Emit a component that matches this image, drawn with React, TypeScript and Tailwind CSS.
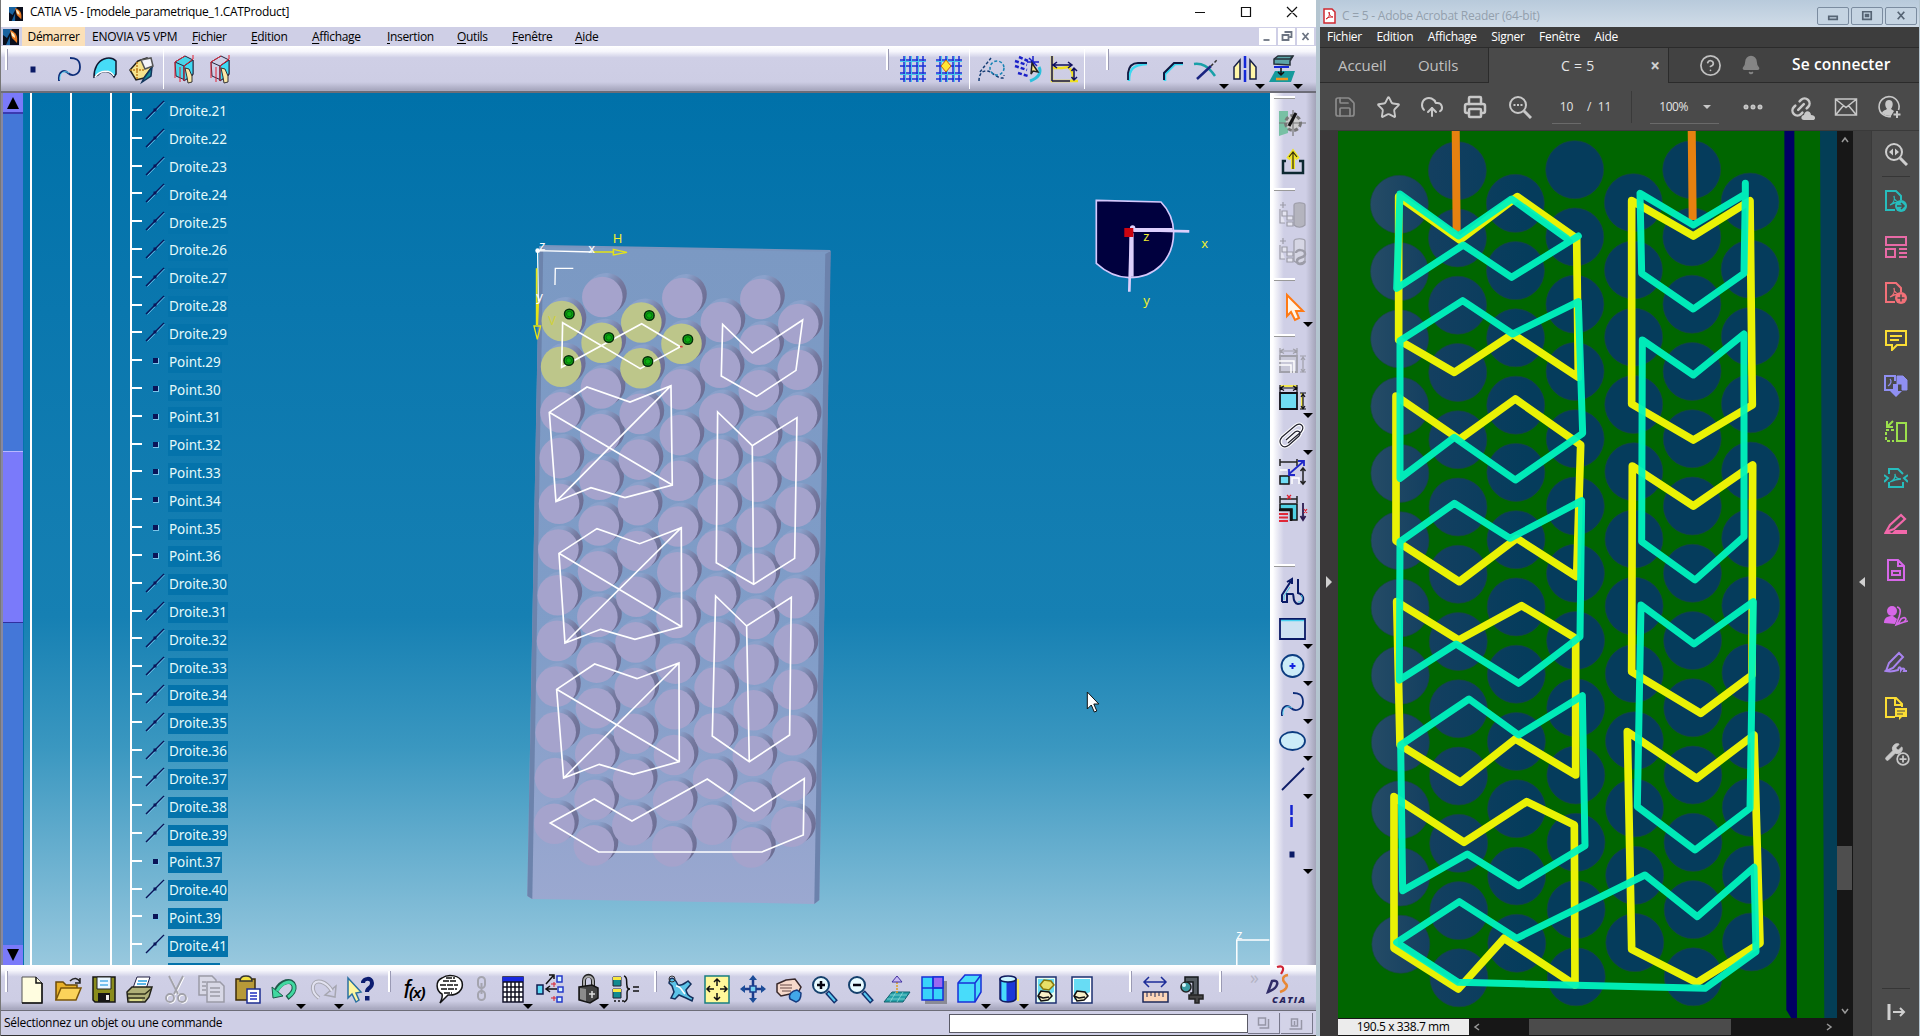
import React from "react";
import {
  Star, CloudUpload, Printer, Save, Link2, CircleHelp, Bell, Ellipsis, Wrench,
} from "lucide-react";

type P = { children?: React.ReactNode; className?: string };

const Ico = ({ children, className = "" }: P) => (
  <svg viewBox="0 0 32 32" className={"block h-8 w-8 shrink-0 overflow-visible " + className} fill="none" stroke="#0a1a66" strokeWidth="1.5">
    {children}
  </svg>
);

const Slot = ({ children, arrow, w = "w-9" }: { children?: React.ReactNode; arrow?: boolean; w?: string }) => (
  <div className={"relative flex shrink-0 justify-center " + w}>
    {children}
    {arrow && <i className="absolute -right-0.5 top-[31px] h-0 w-0 border-x-[5px] border-t-[5px] border-x-transparent border-t-black" />}
  </div>
);

const Handle = ({ className = "" }: { className?: string }) => (
  <div className={"h-[21px] w-[3px] shrink-0 border-r border-[#9a9ab4] bg-white " + className} />
);
const Sep = ({ className = "" }: { className?: string }) => <div className={"-mt-1 h-10 w-px shrink-0 bg-white " + className} />;
const RailMark = ({ className }: { className: string }) => <div className={"ml-px h-[3px] w-[21px] shrink-0 border-b border-[#999] bg-white " + className} />;

/* ---------- sketch icons ---------- */
const PointIcon = () => <Ico><rect x="13.500" y="13.500" width="5" height="6" fill="#0a1a66" stroke="none" /></Ico>;
const SplineIcon = () => <Ico><path d="M6 28c-1-10 5-12 9-8s12 2 12-6-5-9-10-9" stroke="#0c2c78" strokeWidth="1.800" /><path d="M7 27c-1-8 5-10 9-7" stroke="#56d6f5" strokeWidth="1" /></Ico>;
const SurfaceIcon = () => <Ico><path d="M5 24C5 15 9 8 15 6c6-2 10 0 12 2v13l-2 3c-4-7-12-7-16-2z" fill="#46dcf7" stroke="#101830" /><path d="M6 24c5-7 15-8 19-1" stroke="#fff" /></Ico>;
const BoxIcon = () => <Ico><path d="M5 17 13 8l9-3 5 9-8 11-8 2z" fill="#f7e38c" stroke="#222" /><path d="m19 25 8-11-1 9-9 6z" fill="#168b96" stroke="#14365c" /><path d="M16 7 26 5l2 8-8 3z" fill="#f4f4fa" stroke="#555" /><path d="M5 17h15M12 9v18" stroke="#c08020" strokeDasharray="2 1" /></Ico>;
const CubeHand = ({ f }: { f: string }) => (
  <Ico>
    <path d="M7 9 17 3l8 4v15l-8 5-9-4z" fill={f} stroke="#262640" strokeWidth="1" />
    <path d="M7 9l9 4 9-6M16 13v15" stroke="#262640" strokeWidth="1" /><path d="M16 13 25 7v14l-9 7z" fill="#3fdaf4" stroke="#262640" strokeWidth="1" />
    <path d="M7 25V9l10-6M12 29V14M16 28V13l9-7V2" stroke="#e02030" strokeWidth="1" />
    <path d="m17 15 4 1 3 7v6l-4 1-1-6z" fill="#fbe8a8" stroke="#333" strokeWidth="1" />
  </Ico>
);
const GridIcon = ({ dot }: { dot?: boolean }) => (
  <Ico>
    <path d="M7 3v26M13 3v26M20 3v26M26 3v26M3 7h26M3 13h26M3 20h26M3 26h26" stroke="#1a2fd8" strokeWidth="1.500" />
    <path d="M8.500 3v26M14.500 3v26M21.500 3v26M3 8.500h26M3 21.500h26" stroke="#48c8e8" strokeWidth="1" />
    {dot && <path d="m13 7 5 6-5 6-5-6z" fill="#ffe634" stroke="#c8600c" strokeWidth="1" />}
  </Ico>
);
const ConstrIcon = () => <Ico><path d="M3 28c0-11 8-12 13-8s13 8 12 2M4 19 15 5" stroke="#143c74" strokeDasharray="3 2" /><circle cx="21" cy="15" r="7" stroke="#1683b4" strokeDasharray="3 2" /></Ico>;
const DimConstrIcon = () => <Ico><path d="m3 8 12 4M3 13l12 4M6 20l10 3M7 4l9 4" stroke="#1a20c8" strokeWidth="2.500" strokeDasharray="4 2" /><path d="M21 3v12M15 9h12M17 5l8 8" stroke="#1a20c8" /><path d="M18 28c8-3 12-8 9-14" stroke="#2cc0dc" strokeWidth="3" /><path d="m20 10 6 9-5-1-2 3z" fill="#fbe88c" stroke="#222" /></Ico>;
const GeoDimIcon = () => <Ico><path d="M4 3v25h26M4 15h10l6-1c5 3 5 8 5 14" stroke="#f0e020" strokeWidth="2.500" /><path d="M4 28V3M4 28h18M5 12h19M9 9l-4 3 4 3M20 9l4 3-4 3M26 15v12M23.500 18l2.500-3 3 3M23.500 24l2.500 3 3-3" stroke="#101060" /></Ico>;
const FilletIcon = () => <Ico><path d="M8 28c0-12 4-16 18-17" stroke="#3ad8f0" strokeWidth="2.500" /><path d="M7 27v-7c1-7 4-10 10-10h9" stroke="#101840" strokeWidth="1.800" /></Ico>;
const ChamferIcon = () => <Ico><path d="M8 28v-7l10-10h8" stroke="#3ad8f0" strokeWidth="2.500" /><path d="M7 27v-7l10-10h9" stroke="#101840" strokeWidth="2" /></Ico>;
const TrimIcon = () => <Ico><path d="M1 11c8-1 14 2 21 12" stroke="#19a0a8" strokeWidth="2.500" /><path d="M4 26 18 13" stroke="#1a2480" strokeWidth="2.500" /><path d="m18 13 7-7" stroke="#333" strokeDasharray="3 2" /></Ico>;
const MirrorIcon = () => <Ico><path d="M5 26V14l6-7v19zM27 26V14l-6-7v19z" fill="#fff6a8" stroke="#182048" /><path d="M16 3v27" stroke="#1428d8" strokeWidth="2.500" strokeDasharray="12 2" /></Ico>;
const ProjectIcon = () => <Ico><path d="m3 29 6-11h20l-4 11z" fill="#169a9c" stroke="none" /><path d="m8 6 4-3h15l-3 5v4l-16-1z" fill="#5ca4a8" stroke="#26303a" /><path d="M8 6h16l3-3" stroke="#26303a" /><path d="M8 14h15" stroke="#1428d8" strokeWidth="2" /><path d="M15 15v7m-3-3 3 3 3-3" stroke="#101010" /><path d="M10 26h12" stroke="#f09820" strokeWidth="2.500" /></Ico>;

/* ---------- file / standard icons ---------- */
const NewIcon = () => <Ico><path d="M6 4h14l6 6v20H6z" fill="#fffde0" stroke="#555" strokeWidth="1" /><path d="M20 4v6h6M26 10v20H6" stroke="#111" /></Ico>;
const OpenIcon = () => <Ico><path d="M4 27V9h7l3 3h11v5" fill="#e8b028" stroke="#6b4a08" /><path d="m4 27 5-12h20l-5 12z" fill="#fbd35a" stroke="#7b5508" /><path d="M18 8c4-4 8-3 10 1m0-4v5h-5" stroke="#222" /></Ico>;
const SaveIcon = () => <Ico><path d="M5 4h22v25H7l-2-2z" fill="#8a8c1c" stroke="#161616" /><path d="M9 4h14v12H9z" fill="#e9f6ff" stroke="#222" strokeWidth="1" /><path d="M12 8h8M12 12h8" stroke="#50b0e8" /><path d="M10 20h12v9H10z" fill="#161616" stroke="none" /><path d="M18 22h3v5h-3z" fill="#eee" stroke="none" /></Ico>;
const PrintIcon = () => <Ico><path d="m9 15 4-11h13l-4 12z" fill="#fff" stroke="#224" strokeWidth="1" /><path d="M14 8h9M13 11h9" stroke="#28a0e0" /><path d="m3 19 5-5h20l-3 10-4 5H4z" fill="#b0b078" stroke="#22221a" /><path d="M4 21h17l6-5M4 25h17" stroke="#33331c" /><path d="M6 27h12" stroke="#e8e88c" strokeWidth="1.500" /></Ico>;
const CutIcon = () => <Ico><g stroke="#fff" transform="translate(1 1)"><path d="m9 3 9 18M23 3l-9 18" /><circle cx="10" cy="25" r="4" /><circle cx="22" cy="25" r="4" /></g><g stroke="#a2a2aa" strokeWidth="1.800"><path d="m9 3 9 18M23 3l-9 18" /><circle cx="10" cy="25" r="4" /><circle cx="22" cy="25" r="4" /></g></Ico>;
const CopyIcon = () => <Ico><g fill="#d8d8e6" stroke="#9a9aa6"><path d="M3 3h13l4 4v15H3z" /><path d="M11 9h13l4 4v16H11z" /><path d="M14 15h10M14 19h10M14 23h10M6 9h4M6 13h4M6 17h4" /></g></Ico>;
const PasteIcon = () => <Ico><path d="M4 6h19v21H4z" fill="#b89a38" stroke="#3c2c08" /><path d="M8 8c0-4 3-5 6-5s6 1 6 5z" fill="#f2e040" stroke="#333" /><path d="M15 16h13v14H15z" fill="#fff" stroke="#1c2c90" /><path d="M18 20h7M18 23h7M18 26h7" stroke="#2030c0" /></Ico>;
const UndoIcon = () => <Ico><path d="M7 18C12 8 23 5 25 13c1 5-3 9-7 12" stroke="#1c5a4a" strokeWidth="5" /><path d="m3 14 1 11 10-2z" fill="#40d8a0" stroke="#1c5a4a" strokeWidth="1" /><path d="M8 18C13 9 23 6 25 13c1 5-3 9-6 11" stroke="#40d8a0" strokeWidth="3" /></Ico>;
const RedoIcon = () => <Ico><path d="m29 13-1 11-10-2z" stroke="#a6a6b0" /><path d="M25 18C19 8 8 5 6 13c-1 5 2 9 6 12" stroke="#a6a6b0" strokeWidth="4" /><path d="M25 18C19 8 8 5 6 13c-1 5 2 9 6 12" stroke="#e2e2f0" strokeWidth="2" /></Ico>;
const HelpIcon = () => <Ico><path d="m4 5 13 14-5 1 3 7-3 2-4-8-4 4z" fill="#fff7a0" stroke="#2a70a0" /><path d="M19 10c0-5 9-6 9 0s-5 4-5 9" stroke="#0c1c70" strokeWidth="4" /><path d="M21 23h4.500v4.500H21z" fill="#0c1c70" stroke="none" /></Ico>;
const FxIcon = () => <div className="flex h-8 w-8 items-center justify-center font-['Liberation_Sans'] text-[25px] italic leading-8 tracking-[-1.500px] text-black"><span>f</span><span className="mt-2 text-[15px] font-bold tracking-[-1px]">(x)</span></div>;
const CommentIcon = () => <Ico><path d="M8 21C2 18 1 8 8 5c7-5 18-2 20 4 2 8-5 14-14 13L6 30c2-4 3-6 2-9z" fill="#fff" stroke="#111" /><path d="M9 8h14M6 12h18M7 16h16M12 5h9M10 20h8" stroke="#111" strokeDasharray="6 1" /></Ico>;
const ChainIcon = () => <Ico><g stroke="#a4a4ae" strokeWidth="2"><rect x="12" y="4" width="7" height="11" rx="3.500" /><rect x="12" y="18" width="7" height="9" rx="3.500" /><path d="M15.500 10v11" /></g></Ico>;
const TableIcon = () => <Ico><path d="M6 4h20v25H6z" fill="#fff" stroke="#15152c" /><path d="M5.500 4h21v5h-21z" fill="#1828e0" stroke="none" /><path d="M6 9h20M6 14h20M6 19h20M6 24h20M10 9v20M14 9v20M18 9v20M22 9v20" stroke="#101020" /></Ico>;
const GraphIcon = () => <Ico><path d="M2 12h6v9H2z" fill="#58d8f4" stroke="#101c50" /><path d="M22 3h5v6h-5zM23 14h5v5h-5zM22 24h5v5h-5z" fill="#d8f4ff" stroke="#2438c8" /><path d="M12 16h10m-7-3-4 3 4 3M11 11l7-8m-4-1h5v4" stroke="#111" /><path d="M16 11h5M19 9v5M16 25h5M19 23v5" stroke="#d82030" strokeWidth="1" /></Ico>;
const LockIcon = () => <Ico><path d="M11 13V8c0-7 9-7 9 0v5" stroke="#222" strokeWidth="4" /><path d="M11 13V8c0-6 9-6 9 0v5" stroke="#aaa" strokeWidth="2" /><path d="m6 14 13-2 6 3v10l-8 5-11-3z" fill="#444" stroke="#151515" /><path d="M7 15v11l6 2V16z" fill="#8c8c8c" stroke="none" /><path d="M19 18v7M16 21h6" stroke="#ddd" /></Ico>;
const EquivIcon = () => <Ico><path d="M3 4h8v9H3zM3 16h8v9H3z" fill="#128a90" stroke="#223" strokeWidth="1" /><path d="M3 4h8v3H3zM3 16h8v3H3z" fill="#f8e840" stroke="none" /><path d="M14 3c4 1 2 5 3 10 0 2 1 3 3 3-2 0-3 1-3 4 0 5 1 7-3 9" stroke="#111" /><path d="M23 14h6M23 18h6M4 28h2M8 28h2M12 28h2" stroke="#111" /></Ico>;
const PlaneIcon = () => <Ico><path d="M5 6c3-2 5 0 8 6 4 1 7-2 10-4l3 3-5 6c1 4 2 6 7 8l-1 3-6-3-7-3-4 4-4-1 3-6-2-6-3-3z" fill="#5cc4e8" stroke="#14305c" /><circle cx="7" cy="6" r="3" stroke="#333" strokeWidth="1" /><path d="M11 13c5 0 5 4 9 8" stroke="#fff" /></Ico>;
const FitIcon = () => <Ico><path d="M4 3h24v27H4z" fill="#fff89a" stroke="#187e80" /><path d="M16 6v7m-3-4 3-3 3 3M16 27v-7m-3 4 3 3 3-3M6 16h7M9 13l-3 3 3 3M26 16h-7m4-3 3 3-3 3" stroke="#111" /></Ico>;
const PanIcon = () => <Ico><path d="M16 5v22M5 16h22" stroke="#1b3c8c" strokeWidth="2.500" /><path d="m16 2-4 5h8zM16 30l-4-5h8zM3 16l5-4v8zM29 16l-5-4v8z" fill="#1b4c98" stroke="none" /><path d="M13 13h6v6h-6z" fill="#74d0f0" stroke="#1b3c8c" /></Ico>;
const RotateIcon = () => <Ico><path d="M4 11 13 7l9-1 6 8-3 6-8 1-9 2-4-4z" fill="#f7d9cb" stroke="#38282a" /><path d="M7 12h12M7 15h12M9 18h9" stroke="#664844" strokeWidth="1" /><path d="M17 26c-2-5 2-8 7-9l4 3c0 5-1 8-5 9z" fill="#42a8e8" stroke="#163c80" /></Ico>;
const ZoomIcon = ({ plus }: { plus?: boolean }) => <Ico><path d="m18 19 9 10" stroke="#12306c" strokeWidth="5" /><path d="m19 20 7 8" stroke="#58c8f0" strokeWidth="2" /><circle cx="12" cy="12" r="8" fill="#e8fbff" stroke="#14406c" strokeWidth="2" /><path d={plus ? "M8 12h8M12 8v8" : "M8 12h8"} stroke="#050510" strokeWidth="2.500" /></Ico>;
const NormalIcon = () => <Ico><path d="m3 29 8-10h18l-7 10z" fill="#24a0a8" stroke="#12606c" strokeWidth="1" /><path d="m6 26h18M9 22h17M15 19l-6 10M22 19l-6 10" stroke="#98e0e0" strokeWidth=".7" /><path d="M16 9v11" stroke="#e0a020" strokeDasharray="2 1" /><path d="m11 9 5-6 5 6z" fill="#c8b8f4" stroke="#4030a0" strokeWidth="1" /></Ico>;
const MultiIcon = () => <Ico><path d="M8 8h22v23H8z" fill="#8a8a96" stroke="none" /><path d="M5 4h21v23H5z" fill="#38d4fa" stroke="#1830d8" /><path d="M16 4h10v11H16z" fill="#9c68f0" stroke="#1830d8" /><path d="M5 15h21M16 4v23" stroke="#1830d8" /></Ico>;
const CubeIcon = () => <Ico><path d="m4 10 7-8h16v17l-6 10H4z" fill="#48dcfa" stroke="#1830d8" /><path d="M4 10h17v19M21 10l6-8" stroke="#1830d8" /></Ico>;
const CylIcon = () => <Ico><path d="M26 6v22" stroke="#f8e860" strokeWidth="2" /><path d="M8 6h16v20c-3 4-13 4-16 0z" fill="#1c38d8" stroke="#101c60" /><path d="M9.500 8h5v20c-3 0-5-1-5-2z" fill="#48dcfa" stroke="none" /><ellipse cx="16" cy="6" rx="8" ry="3" fill="#c8f4ff" stroke="#101c60" /></Ico>;
const ShowIcon = ({ two }: { two?: boolean }) => <Ico><path d="M6 4h20v26H6z" fill={two ? "#e8fff0" : "#fff"} stroke="#1c3070" /><path d="M8 6h16v13L8 27z" fill="#68dcf4" stroke="none" /><path d="m8 23 3-5 8 1 3 4-4 4-7 1z" fill="#f8f0c8" stroke="#111" /><path d="m8 23 5 2 6-1" stroke="#111" />{two && <path d="m10 12 4-5 7 1 3 4-5 5-6-1z" fill="#e8e068" stroke="#88780c" />}</Ico>;
const MeasureIcon = () => <Ico><path d="M5 9h22M10 4 5 9l5 5M22 4l5 5-5 5" stroke="#1c2c98" strokeWidth="1.500" /><path d="M4 19h25v10H4z" fill="#fdd6b8" stroke="#1c2858" /><path d="M8 19v5M12 19v4M16 19v5M20 19v4M24 19v5" stroke="#1c2858" strokeWidth="1" /></Ico>;
const CaliperIcon = () => <Ico><path d="M10 4h13v20h-7v-4h2V9h-5v4h-3z" fill="#555c62" stroke="#15191c" /><circle cx="11" cy="14" r="5" fill="#3c9ca4" stroke="#222" /><circle cx="9" cy="12" r="2" fill="#d8f8ff" stroke="none" /><path d="M14 22h14v4h-4v4h-4v-4h-6z" fill="#444" stroke="#222" /></Ico>;

/* ---------- right rail icons ---------- */
const GearPen = () => <Ico><path d="M3 4h9v22L3 29z" fill="#78c0a4" stroke="none" /><circle cx="17" cy="16" r="7.500" fill="#ccc" stroke="#777" strokeWidth="3" strokeDasharray="4 2.500" /><path d="M3 16h27M17 3v26" stroke="#777" strokeWidth="1.200" /><path d="m13 19 7-13" stroke="#111" strokeWidth="3" /></Ico>;
const ExitIcon = () => <Ico><path d="M10 15H7v12h20V15h-4" stroke="#0c2830" strokeWidth="2.500" /><path d="M17 23V9m-5 4 5-7 5 7" stroke="#f0e428" strokeWidth="4" /><path d="M17 23V7m-4 4 4-5 4 5" stroke="#332c08" strokeWidth="1.200" /></Ico>;
const TreeCyl = ({ q }: { q?: boolean }) => <Ico><g stroke="#9c9ca8" fill="#e4e4f0" strokeWidth="1.200"><path d="M4 6h6M7 3v6M4 10v14h5M6 12h5v5H6zM11 17h6v4h-6zM11 23h6v4h-6z" /><path d="M18 6c0-3 11-3 11 0v20c-3 3-8 3-11 0z" fill={q ? "#d6d6e4" : "#b4b4be"} />{q && <path d="M20 18c0-4 9-4 9 1s-8 2-8 7 7 3 8 0" strokeWidth="2.500" fill="none" />}</g></Ico>;
const SelectIcon = () => <Ico><path d="M11 4v21l4-4 4 8 4-2-3-7h7z" fill="#fff6ea" stroke="#ff7a14" strokeWidth="2" /></Ico>;
const DimBase = ({ c, f }: { c: string; f: string }) => <><path d="M4 3v7M21 3v7M4 6h17M8 4 4 6l4 2.500M17 4l4 2-4 2.500M24 11h6M24 27h6M27 12v15M25 15l2-3 2 3M25 24l2 3 2-3" stroke={c} strokeWidth="1.200" /><path d="M4 11h17v16H4z" fill={f} stroke={c} strokeWidth="1.800" /></>;
const DimGray = () => <Ico><DimBase c="#a0a0aa" f="#c8c8d8" /><path d="M3 20h12v8M3 16h15v12" stroke="#fff" /></Ico>;
const DimIcon = () => <Ico><path d="M4 4h17M26 11v16" stroke="#f4e850" strokeWidth="2" /><DimBase c="#101018" f="#70dcf4" /></Ico>;
const ClipIcon = () => <Ico><path d="m12 24 13-11c5-6-1-10-6-6L6 18c-5 6 1 13 7 8l10-9c3-4-1-6-4-4l-9 8" stroke="#fff" strokeWidth="3.500" /><path d="m12 24 13-11c5-6-1-10-6-6L6 18c-5 6 1 13 7 8l10-9c3-4-1-6-4-4l-9 8" stroke="#222230" strokeWidth="1.200" /></Ico>;
const AnimIcon = () => <Ico><path d="M4 3v7M21 3v7M4 6h17M27 12v16M24.500 15l2.500-3 2.500 3M24.500 25l2.500 3 2.500-3" stroke="#222" /><path d="M4 20h9v8H4z" fill="#70dcf4" stroke="#111" /><path d="m13 18 15-13m-6 0h6v5M13 13v6h6" stroke="#2028c8" strokeWidth="1.800" /><path d="M4 14h7M16 28v-6h7v6" stroke="#fff" /></Ico>;
const EditDim = () => <Ico><path d="M4 3v7M21 3v7M4 6h17" stroke="#222" /><path d="M4 11h17v16h-5V16H4z" fill="#50d0e4" stroke="#111" /><path d="M3 17h12v11" stroke="#111" strokeWidth="2.500" /><path d="M3 21h9M3 24.500h9M3 28h9" stroke="#e02838" strokeWidth="1.800" /><path d="M27 10v17m-2.500-4 2.500 4 2.500-4" stroke="#2c1c50" strokeWidth="1.800" /><path d="m11 2 4 4m0-4-4 4M28 16l3 4m0-4-3 4" stroke="#e02030" strokeWidth="1.200" /></Ico>;
const ProfileIcon = () => <Ico><path d="M6 27V20l9-14M6 27h5v-8h6c1 0-1 9 5 10 7 0 7-9 0-11V4M11 7l5-3v5" strokeWidth="2" /><path d="M8 25v-4l6-9M25 20c3 3 1 7-3 7" stroke="#38c4e0" strokeWidth="1" /></Ico>;
const RectIcon = () => <Ico><path d="M4 6h25v20H4z" fill="#cde2f2" strokeWidth="1.800" /><path d="M5 7.500h23" stroke="#48d0f0" /></Ico>;
const CircIcon = () => <Ico><circle cx="16.500" cy="16" r="11" fill="#ccecf8" stroke="#0c3c80" strokeWidth="1.800" /><path d="M13.500 16h6M16.500 13v6" stroke="#1424e0" strokeWidth="2" /></Ico>;
const EllIcon = () => <Ico><ellipse cx="16.500" cy="16" rx="12.500" ry="9" fill="#ccecf8" stroke="#0c3c80" strokeWidth="1.800" /></Ico>;
const LineIcon = () => <Ico><path d="M6 27 28 5" strokeWidth="1.800" /></Ico>;
const AxisIcon = () => <Ico><path d="M15.500 5v23" stroke="#1424d0" strokeWidth="2.500" strokeDasharray="10 2" /></Ico>;

const labels = [
  ...Array.from({ length: 9 }, (_, i) => `Droite.${21 + i}`),
  ...Array.from({ length: 8 }, (_, i) => `Point.${29 + i}`),
  ...Array.from({ length: 10 }, (_, i) => `Droite.${30 + i}`),
  "Point.37", "Droite.40", "Point.39", "Droite.41",
];

const Tree = () => (
  <div className="relative h-full w-[210px] overflow-hidden">
    <div className="absolute inset-0 flex">
      <div className="ml-[6px] w-0.5 bg-white" /><div className="ml-[38px] w-0.5 bg-white" />
      <div className="ml-[38px] w-0.5 bg-white" /><div className="ml-[18px] w-0.5 bg-white" />
    </div>
    <div className="absolute left-[107px] top-[5px] flex flex-col">
      {labels.map((l) => (
        <div key={l} className="flex h-[27.820px] shrink-0 items-center">
          <div className="-mt-1 h-0.5 w-[11px] bg-white" />
          <svg viewBox="0 0 20 20" className="-mt-1 ml-[3px] h-5 w-5">
            {l[0] === "D" ? (
              <><path d="M1 19 19 1" stroke="#0a1458" strokeWidth="1.400" /><path d="M2.500 19.500 19.500 2" stroke="#7ac4e8" strokeWidth=".8" /><path d="M8.500 8.500h3v3h-3z" fill="#0a1458" /></>
            ) : (
              <><path d="M8 8h6v6H8z" fill="#7ac4e8" /><path d="M8 8h5v5H8z" fill="#0a1458" /></>
            )}
          </svg>
          <span className="ml-[3px] bg-[#0473ab] px-[1px] font-['Noto_Sans'] text-[13.500px] leading-[21px] tracking-[-0.050px] text-[#e4fafa]">{l}</span>
        </div>
      ))}
      <div className="ml-[37px] mt-[3px] h-5 w-[52px] bg-[#0473ab]" />
    </div>
  </div>
);

const boardCols = [
  [562.5, 321, 555, 12], [603, 297, 594.5, 13], [642, 322.5, 633, 12], [683, 298, 673, 13],
  [721.5, 322, 713, 12], [761, 299, 752, 13], [799, 324, 792, 12],
];
const discs = boardCols.flatMap(([x, y, x2, n], c) =>
  Array.from({ length: n }, (_, i) => ({ x: x + ((x2 - x) * i) / (n - 1), y: y + i * 45.7, row: i, c }))
);
const isLit = (c: number, i: number) => (c === 0 && i < 2) || (c === 1 && i === 1) || (c === 2 && i < 2) || (c === 3 && i === 1);

const Board = () => (
  <svg viewBox="24.7 93 1246 872" className="absolute inset-0 h-full w-full" fill="none">
    <defs>
      <linearGradient id="face" x1="0" y1="0" x2="0" y2="1"><stop offset="0" stopColor="#7b99c3" /><stop offset=".6" stopColor="#809dc8" /><stop offset="1" stopColor="#9ba8d0" /></linearGradient>
      <linearGradient id="side" x1=".1" y1="0" x2="1" y2=".6"><stop offset=".35" stopColor="#8aa1cb" /><stop offset=".7" stopColor="#75799f" /><stop offset="1" stopColor="#6d6e94" /></linearGradient>
    </defs>
    <path d="M540 246 831 251 820 900 815 904 532 899 528 896z" fill="url(#face)" />
    <path d="M540 250 544 246 533 899 528 896z" fill="#6c83ac" />
    <path d="M826 254 831.500 251 820 900 815 904z" fill="#6c82ac" />
    <path d="M544 246 831 251" stroke="#7b94bd" strokeWidth="2" />
    {discs.map((d, i) => (
      <g key={i}>
        <circle cx={d.x + 4} cy={d.y - 3.5} r="20.500" fill="url(#side)" />
        <circle cx={d.x} cy={d.y} r="20.300" fill={isLit(d.c, d.row) ? "#bdc68a" : "#a5a3cc"} />
      </g>
    ))}
    <g transform="translate(520 230) scale(.33333)" stroke="#fff" strokeWidth="5">
      <path d="M130 278 363 416 483 350 367 281 127 412zM610 283 699 369 850 270 830 421 712 499 606 438z" />
      <path d="M90 547 203 471 332 516 455 467 459 765 317 803 215 773 110 815zM90 547 459 765M110 815 455 467" />
      <path d="M595 546 699 647 833 563 826 985 703 1063 591 998zM699 647 703 1063" />
      <path d="M119 970 233 896 361 941 486 893 487 1190 347 1228 244 1198 137 1239zM119 970 487 1190M137 1239 486 893" />
      <path d="M589 1098 682 1188 816 1102 811 1515 690 1595 579 1518zM682 1188 690 1595" />
      <path d="M112 1378 226 1302 353 1346 479 1299 480 1595 342 1633 240 1603 133 1644zM112 1378 480 1595M133 1644 479 1299" />
      <path d="M93 1779 225 1707 338 1773 564 1647 704 1743 855 1646 852 1815 728 1866 238 1866z" />
      <path d="M107 165 108 115H162M55 62 57 215M55 62 220 66" strokeWidth="4" />
      <g stroke="#e4e416"><path d="M220 66H285M57 215 54 285M52 115V285" strokeWidth="5" /><path d="M282 58 323 67 282 75zM44 288H64L54 328z" strokeWidth="4" /></g>
      <circle cx="55" cy="62" r="7" fill="#fff" stroke="none" />
      <path d="M482 350h8" stroke="#d04040" />
    </g>
    {[[570, 314], [650, 315.5], [609.5, 337.5], [688.500, 339.500], [569.500, 360.500], [648.500, 361.500]].map(([x, y]) => (
      <g key={x}><circle cx={x} cy={y} r="4.800" fill="#0cae10" stroke="#062c0a" strokeWidth="1.500" /><circle cx={x} cy={y} r="2.800" stroke="#075010" strokeWidth=".7" /></g>
    ))}
    <g transform="translate(860 0) scale(.33333)">
      <path d="M711 601 905 606A134 134 0 0 1 943 697C943 780 885 833 810 833 770 832 735 812 711 790z" fill="#00003e" stroke="#d4c8fc" strokeWidth="5" />
      <path d="M812 690 990 694M815 700 810 875" stroke="#dccffc" strokeWidth="8" /><path d="M822 690H940M817 700V830" stroke="#dccffc" strokeWidth="12" />
      <circle cx="820" cy="684" r="8" fill="#dccffc" /><path d="M795 684h27v27h-27z" fill="#cc0410" />
    </g>
    <g fontFamily="Noto Sans" fontSize="13" fill="#f0ee30">
      <text x="1144" y="241">z</text><text x="1202" y="248">x</text><text x="1144" y="305">y</text>
      <text x="613.500" y="243">H</text><text x="549" y="325" fill="#cfd040">V</text>
      <g fill="#fff"><text x="540" y="250">z</text><text x="589" y="253">x</text><text x="537" y="301">y</text><text x="1237" y="939">z</text></g>
    </g>
    <path d="M1237.500 965V940H1270" stroke="#fff" strokeWidth="1.500" />
    <path d="M1088 692v17l4-4 3 7 2.500-1-3-7h5z" fill="#fff" stroke="#111" />
  </svg>
);

const menu = [
  ["Fichier", "w-[59px]"], ["Edition", "w-[61px]"], ["Affichage", "w-[75px]"], ["Insertion", "w-[70px]"],
  ["Outils", "w-[55px]"], ["Fenêtre", "w-[63px]"], ["Aide", "w-10"],
];

const Logo = ({ className }: { className: string }) => (
  <svg viewBox="0 0 16 16" className={className}><path d="M0 0h16v16H0z" fill="#0a0e1c" /><path d="M0 0h9L4 9 0 6zM7 7 3 16h4z" fill="#1c78c0" opacity=".8" /><path d="M7 1c6 2 8 6 7 13L9 9z" fill="#e87820" /><path d="M8 3c3 1 4 3 4 6L9 7z" fill="#fff0c8" /></svg>
);

const barBg = "bg-[linear-gradient(#ffffff_0,#f6f6fc_12%,#cfcfe6_26%,#cdcde4_80%,#a9a9c0_97%)]";
const R = "w-[38px]";

const Catia = () => (
  <div className="flex w-[1316px] shrink-0 flex-col border-l border-[#777] bg-[#cfcfe6] font-['Open_Sans'] text-xs text-black">
    <div className="flex h-[27px] shrink-0 items-center bg-white pl-2">
      <Logo className="h-[14px] w-[14px]" />
      <span className="ml-[7px] -mt-1 tracking-[-0.320px]">CATIA V5 - [modele_parametrique_1.CATProduct]</span>
      <svg viewBox="0 0 110 14" className="ml-auto mr-[15px] mb-1 h-[14px] w-[110px]" fill="none" stroke="#111" strokeWidth="1.200">
        <path d="M4 7.500h10M50.500 2.500h9v9h-9zM96 2l10 10M106 2 96 12" />
      </svg>
    </div>
    <div className="flex h-[19px] shrink-0 items-center tracking-[-0.350px]">
      <Logo className="ml-[1px] h-4 w-[18px]" />
      <span className="ml-[2px] flex h-full w-[63px] items-center justify-center bg-[#fbe0b8]">Démarrer</span>
      <span className="ml-[7px] w-[100px] whitespace-nowrap tracking-[-0.250px]">ENOVIA V5 VPM</span>
      {menu.map(([m, w]) => (<span key={m} className={w}><u className="underline-offset-2">{m[0]}</u>{m.slice(1)}</span>))}
      <div className="ml-auto mr-[2px] flex gap-[2px]">
        {["M4 12h6", "M6 4h7v5h-2M4 7h6v5H4z", "m5 5 6 7m0-7-6 7"].map((d) => (
          <svg key={d} viewBox="0 0 16 17" className="h-[17px] w-[17px] bg-white" fill="none" stroke="#6c7482" strokeWidth="1.800"><path d={d} /></svg>
        ))}
      </div>
    </div>
    <div className={"flex h-[47px] shrink-0 items-start border-b-2 border-[#6d6d78] pt-[7px] " + barBg}>
      <Handle className="-mt-1 ml-1" />
      <div className="ml-[7px] flex"><Slot><PointIcon /></Slot><Slot><SplineIcon /></Slot><Slot><SurfaceIcon /></Slot><Slot><BoxIcon /></Slot></div>
      <Sep className="ml-[4px]" />
      <div className="ml-[2px] flex"><Slot><CubeHand f="#49d4e8" /></Slot><Slot><CubeHand f="#cfcfe6" /></Slot></div>
      <Handle className="-mt-1 ml-[648px]" />
      <div className="ml-[6px] flex"><Slot><GridIcon /></Slot><Slot><GridIcon dot /></Slot></div>
      <Sep className="ml-[2px]" />
      <div className="ml-[4px] flex"><Slot><ConstrIcon /></Slot><Slot><DimConstrIcon /></Slot><Slot><GeoDimIcon /></Slot></div>
      <Sep className="ml-[2px]" />
      <Handle className="-mt-1 ml-[21px]" />
      <div className="ml-[10px] flex"><Slot><FilletIcon /></Slot><Slot><ChamferIcon /></Slot><Slot arrow><TrimIcon /></Slot><Slot arrow><MirrorIcon /></Slot><Slot arrow w={R}><ProjectIcon /></Slot></div>
    </div>
    <div className="flex h-[872px] shrink-0">
      <div className="flex w-[23px] shrink-0 flex-col border-l-2 border-[#8888a0] bg-[#0473ab] pr-[1px]">
        <div className="flex h-[21px] items-center justify-center border-b-2 border-[#3a3ab0] bg-[#7a7afa]"><i className="h-0 w-0 border-x-[6px] border-b-[12px] border-x-transparent border-b-black" /></div>
        <div className="h-[337px] bg-[#4477d8]" />
        <div className="h-[172px] border-y border-t-[#b8b8ff] border-b-[#3030a0] bg-[#7a7afa]" />
        <div className="flex-1 bg-[#4477d8]" />
        <div className="flex h-[20px] items-center justify-center bg-[#7a7afa]"><i className="h-0 w-0 border-x-[6px] border-t-[12px] border-x-transparent border-t-black" /></div>
      </div>
      <div className="relative w-[1246px] shrink-0 overflow-hidden bg-[linear-gradient(#0071a9_0,#0a77ae_25%,#1680b3_60%,#3a97c0_75%,#98c8de_100%)]">
        <Tree />
        <Board />
      </div>
      <div className="flex flex-1 flex-col bg-[linear-gradient(90deg,#ffffff_0,#fff_6%,#cfcfe6_30%,#cfcfe6_78%,#a3a3b8_100%)] pl-[3px]">
        <RailMark className="mt-[3px]" />
        <div className="mt-[8px] flex flex-col gap-[7px]"><Slot w={R}><GearPen /></Slot><Slot w={R}><ExitIcon /></Slot></div>
        <RailMark className="mt-[10px]" />
        <div className="mt-[8px] flex flex-col gap-1"><Slot w={R}><TreeCyl /></Slot><Slot w={R}><TreeCyl q /></Slot></div>
        <RailMark className="mt-[11px]" />
        <div className="mt-[10px]"><Slot w={R} arrow><SelectIcon /></Slot></div>
        <RailMark className="mt-[11px]" />
        <div className="mt-[8px] flex flex-col gap-[5px]"><Slot w={R}><DimGray /></Slot><Slot arrow w={R}><DimIcon /></Slot><Slot arrow w={R}><ClipIcon /></Slot><Slot w={R}><AnimIcon /></Slot><Slot w={R}><EditDim /></Slot></div>
        <RailMark className="mt-[39px]" />
        <div className="mt-[8px] flex flex-col gap-[5.500px]">
          <Slot w={R}><ProfileIcon /></Slot><Slot arrow w={R}><RectIcon /></Slot><Slot arrow w={R}><CircIcon /></Slot><Slot arrow w={R}><SplineIcon /></Slot>
          <Slot arrow w={R}><EllIcon /></Slot><Slot arrow w={R}><LineIcon /></Slot><Slot w={R}><AxisIcon /></Slot><Slot arrow w={R}><PointIcon /></Slot>
        </div>
      </div>
    </div>
    <div className={"flex h-[46px] shrink-0 items-start border-b border-[#6d6d78] pt-[8px] " + barBg}>
      <Handle className="-mt-0.5 ml-[4px]" />
      <div className="ml-[6px] flex"><Slot><NewIcon /></Slot><Slot><OpenIcon /></Slot><Slot><SaveIcon /></Slot><Slot><PrintIcon /></Slot><Slot><CutIcon /></Slot><Slot><CopyIcon /></Slot><Slot><PasteIcon /></Slot><Slot arrow w={R}><UndoIcon /></Slot><Slot arrow w={R}><RedoIcon /></Slot><Slot><HelpIcon /></Slot></div>
      <Handle className="-mt-0.5 ml-[10px]" />
      <div className="ml-[5px] flex"><Slot><FxIcon /></Slot><Slot><CommentIcon /></Slot><Slot w="w-[27px]"><ChainIcon /></Slot><Slot arrow><TableIcon /></Slot><Slot w="w-[40px]"><GraphIcon /></Slot><Slot arrow><LockIcon /></Slot><Slot w={R}><EquivIcon /></Slot></div>
      <Handle className="-mt-0.5 ml-[9px]" />
      <div className="ml-[6px] flex"><Slot><PlaneIcon /></Slot><Slot><FitIcon /></Slot><Slot><PanIcon /></Slot><Slot><RotateIcon /></Slot><Slot><ZoomIcon plus /></Slot><Slot><ZoomIcon /></Slot><Slot><NormalIcon /></Slot><Slot><MultiIcon /></Slot><Slot arrow w={R}><CubeIcon /></Slot><Slot arrow w={R}><CylIcon /></Slot><Slot w="w-[37px]"><ShowIcon two /></Slot><Slot><ShowIcon /></Slot></div>
      <Handle className="-mt-0.5 ml-[29px]" />
      <div className="ml-[5px] flex"><Slot><MeasureIcon /></Slot><Slot><CaliperIcon /></Slot></div>
      <Handle className="-mt-0.5 ml-[10px]" />
      <span className="-mt-1 ml-[28px] text-lg leading-4 text-[#b4b4c4]">»</span>
      <svg viewBox="0 0 44 44" className="-mt-[9px] ml-[5px] h-[44px] w-[44px] shrink-0" fill="none">
        <path d="M13 3c6-2 8 1 4 7" stroke="#d02434" strokeWidth="2.200" />
        <path d="M4 28l4-11c8-2 7 7-4 11z" stroke="#302c68" strokeWidth="2.500" />
        <path d="M24 11c-6 1-6 5-3 8 4 3 1 7-5 9" stroke="#e88834" strokeWidth="2.500" />
        <text x="8" y="39" fontFamily="Open Sans" fontSize="9.500" fontWeight="800" fontStyle="italic" fill="#27245c" textLength="33">CATIA</text>
      </svg>
    </div>
    <div className="flex flex-1 items-start border-b border-[#333]">
      <span className="ml-[3px] mt-[4px] tracking-[-0.280px]">Sélectionnez un objet ou une commande</span>
      <div className="ml-auto mt-[3px] h-[19px] w-[299px] border border-[#5a5a66] bg-white" />
      {["M10 5h7v7h-7zM20 6v9h-9", "M10 6h6v7h-6zM20 7v9H8M13 8v4"].map((d) => (
        <svg key={d} viewBox="0 0 30 20" className="mr-[1px] mt-[2px] h-[21px] w-[32px] border-b border-r border-[#77778a] bg-[#d3d3e8]" fill="none" stroke="#9696a6" strokeWidth="1.500"><path d={d} /></svg>
      ))}
      <div className="w-[2px]" />
    </div>
  </div>
);

/* ---------- document viewer ---------- */
const pdfCols = [[238, 223, 12], [412, 122, 13], [586, 220, 12], [764, 119, 13], [940, 218, 12], [1115, 119, 13], [1290, 216, 12]];
const yellow = [
  "M236 200 420 330 592 200 770 325 775 742 578 612 403 727 236 630z",
  "M228 798 418 928 586 807 782 945 770 1340 590 1225 418 1355 228 1232z",
  "M230 1415 416 1530 605 1427 767 1525 767 1935 586 1827 421 1957 240 1845z",
  "M222 2000 432 2137 620 2015 763 2085 765 2565 552 2425 415 2577 222 2455z",
  "M935 212 1120 318 1290 212 1297 825 1120 930 935 822z",
  "M937 1008 1120 1128 1298 1005 1296 1635 1142 1750 935 1625z",
  "M922 1805 1130 1945 1302 1815 1320 2440 1130 2558 935 2458z",
];
const cyan = [
  "M775 318 575 442 430 345 230 475 240 192 415 318 575 207 740 325",
  "M240 632 428 512 578 612 775 515 788 910 586 1050 403 922 240 1045z",
  "M240 1235 403 1120 570 1225 785 1112 780 1520 596 1660 408 1542 238 1650z",
  "M242 1845 447 1707 596 1815 787 1697 795 2147 596 2267 442 2172 248 2282z",
  "M230 2437 418 2315 590 2425 975 2235 1132 2360 1302 2212 1308 2465 1155 2575 415 2557z",
  "M1276 160V192L1120 285 960 190 965 430 1120 537 1272 430 1276 192",
  "M967 630 1120 735 1272 612V1220L1125 1350 965 1235z",
  "M963 1425 1122 1542 1300 1415 1290 2035 1125 2160 952 2030z",
];

const PdfPage = () => (
  <svg viewBox="54 3 1497 2661" preserveAspectRatio="none" className="block h-[887px] w-[499px] bg-[#006600]" fill="none">
    <defs><linearGradient id="pd" gradientUnits="userSpaceOnUse" x1="140" y1="0" x2="620" y2="0"><stop offset="0" stopColor="#264c66" /><stop offset=".4" stopColor="#133f60" /><stop offset="1" stopColor="#053c5c" /></linearGradient></defs>
    <g className="blur-[1.500px]">
      {pdfCols.flatMap(([x, y, n]) => Array.from({ length: n }, (_, i) => (
        <circle key={`${x}-${i}`} cx={x + i * 0.4} cy={y + i * 201.8} r="87" fill="url(#pd)" stroke="#154a3c" strokeWidth="2" />
      )))}
      <path d="M1393-10h30l4 1390 4 1300h-8l-24-40-3-1350z" fill="#000064" />
      <path d="M1500-10h70v2690h-57z" fill="#033e56" />
      <g strokeLinejoin="round" strokeLinecap="round">
        <g stroke="#eaf205" strokeWidth="23">{yellow.map((d) => <path key={d} d={d} />)}</g>
        <g stroke="#e68110" strokeWidth="24" strokeLinecap="butt"><path d="M407-15 410 305M1115-15 1118 270" /></g>
        <g stroke="#00f3bd" strokeWidth="21" strokeOpacity=".95">{cyan.map((d) => <path key={d} d={d} />)}</g>
      </g>
    </g>
  </svg>
);

const G = ({ children, c, className = "" }: { children: React.ReactNode; c: string; className?: string }) => (
  <svg viewBox="0 0 24 24" className={"block h-6 w-6 shrink-0 " + className} fill="none" stroke={c} strokeWidth="2">{children}</svg>
);
const acro = "M6 16c4-2 5-6 4-9 0 4 3 6 6 6-4 0-7 1-10 3z";

const Tools = () => (
  <div className="flex w-[48px] shrink-0 flex-col items-center border-l border-[#3a3a3a] bg-[#4b4b4b] pl-px pt-[11px]">
    <G c="#cfcfcf"><circle cx="10" cy="10" r="8" /><path d="m16 16 7 7" strokeWidth="3" /><path d="m9 6.500-4 3.500 4 3.500zM11 6.500l4 3.500-4 3.500z" fill="#cfcfcf" stroke="none" /></G>
    <div className="mt-[10px] h-px w-7 bg-[#363636]" />
    <div className="mt-[12px] flex flex-col gap-[22.100px]">
      <G c="#27bdbd"><path d="M11 21H2V2h10l5 5v4" /><path d={acro} strokeWidth="1.300" /><circle cx="17" cy="17" r="6" fill="#27bdbd" stroke="none" /><path d="M13 17h7m-3-3 3 3-3 3" stroke="#4b4b4b" strokeWidth="1.500" /></G>
      <G c="#e86aa6"><path d="M2 2h20v8H2zM2 14h9v8H2zM15 14h8M15 18h8M15 22h8" /></G>
      <G c="#f27078"><path d="M11 21H2V2h10l5 5v4" /><path d={acro} strokeWidth="1.300" /><circle cx="17" cy="17" r="6" fill="#f27078" stroke="none" /><path d="M13.500 17h7M17 13.500v7" stroke="#4b4b4b" strokeWidth="1.500" /></G>
      <G c="#fbdd34"><path d="M2 4h20v14h-9l-5 5v-5H2zM6 9h12M6 13h9" /></G>
      <G c="#8f8ff2"><path d="M9 17H1V3h10v5" /><path d="M4 13c3-2 4-5 2-7" strokeWidth="1.200" /><path d="M13 3h6l4 4v10h-5v-6h-5z" fill="#8f8ff2" strokeWidth="1" /><path d="M9 11h5v7h4l-6 6-6-6h3z" fill="#8f8ff2" stroke="none" /></G>
      <G c="#9be04c"><path d="M13 4h9v18h-9z" /><path d="M10 11H2v11h8" strokeDasharray="3 2" /><path d="M3 2v6h6M3 8l6-6" /></G>
      <G c="#27bdbd"><path d="M5 8V3h9l5 5M5 16v5h14v-5" /><path d="m6 16c4-2 6-4 5-8 0 4 3 5 6 5-4 0-7 1-11 3z" strokeWidth="1.300" /><path d="m0 9 4 3-4 4M24 9l-4 3 4 4" /></G>
      <G c="#f268aa"><path d="m2 20 4-7L17 3l4 4L10 17zM14 20h9" strokeWidth="2.200" /><path d="M0 22h23v-4H11l-3 3-5-2z" fill="#f268aa" stroke="none" /></G>
      <G c="#d667e8"><path d="M4 2h10l6 6v14H4zM14 2v6h6M8 13h8v4H8z" /></G>
      <G c="#d667e8"><circle cx="8" cy="7" r="5" fill="#d667e8" stroke="none" /><path d="M0 19c0-6 4-7 9-7l4 3-2 5z" fill="#d667e8" stroke="none" /><path d="M13 3c5 1 3 7 2 10l-3 8 8-3c4-3 1-6-3-3l-3 5 10-3" strokeWidth="1.600" /></G>
      <G c="#a883ee"><path d="m2 21 3-8L15 3l4 4L9 18l-7 3c5 1 9 0 12-1 1-4 3-3 3 0 2-3 4-1 3 1h3" /></G>
      <G c="#fbdd34"><path d="M11 21H2V2h10l6 6v3M11 2v7h7" /><path d="M11 12h12v9h-5l-3 3v-3h-4z" fill="#fbdd34" strokeWidth="0" /><path d="M13 15h8M13 18h6" stroke="#4b4b4b" strokeWidth="1" /></G>
      <div className="relative h-6 w-6"><Wrench className="h-5 w-5 text-[#c8c8c8]" fill="#c8c8c8" strokeWidth={1} /><svg viewBox="0 0 12 12" className="absolute -right-0.5 bottom-0 h-3.5 w-3.5"><circle cx="6" cy="6" r="5" fill="#4b4b4b" stroke="#c8c8c8" strokeWidth="1.500" /><path d="M6 3v6M3 6h6" stroke="#c8c8c8" strokeWidth="1.500" /></svg></div>
    </div>
    <div className="mt-auto h-px w-7 bg-[#363636]" />
    <G c="#d0d0d0" className="mb-[12px] mt-[11px]"><path d="M5 4v16" strokeWidth="3" /><path d="M9 12h11m-4-4 4 4-4 4" /></G>
  </div>
);

const Acrobat = () => (
  <div className="flex w-[604px] flex-col border-l-[4px] border-r border-[#b4c5d0] bg-[#4a4a4a] font-['Open_Sans'] text-white">
    <div className="flex h-[27px] shrink-0 items-center bg-[linear-gradient(#b8cadb,#d0dce8)] pl-[3px] pr-px pt-[4px]">
      <svg viewBox="0 0 13 16" className="h-4 w-[13px]" fill="#fff" stroke="#d02830" strokeWidth="1.500"><path d="M1 1h8l3 3v11H1z" /><path d="M3 11c3-1 4-4 3-7 0 3 2 5 4 5-3 0-5 0-7 2z" strokeWidth="1" /></svg>
      <span className="ml-[6px] text-xs tracking-[-0.230px] text-[#93a0ad]">C = 5 - Adobe Acrobat Reader (64-bit)</span>
      <div className="ml-auto mr-px flex gap-[2px]">
        {["M11 9h9v3h-9z", "M11 4h9v8h-9zM14 7h3v2h-3z", "m12 4 7 8m0-8-7 8"].map((d) => (
          <svg key={d} viewBox="0 0 31 17" className="h-[18px] w-8 rounded-[2px] border border-[#7b8ca0] bg-[#c5d4e2]" fill="none" stroke="#566474" strokeWidth="1.800"><path d={d} /></svg>
        ))}
      </div>
    </div>
    <div className="flex h-[20px] shrink-0 items-center gap-[14.500px] bg-[#3d3d3d] pl-[7px] text-xs tracking-[-0.300px]">
      {["Fichier", "Edition", "Affichage", "Signer", "Fenêtre", "Aide"].map((m) => <span key={m}>{m}</span>)}
    </div>
    <div className="flex h-9 shrink-0 border-t border-[#2b2b2b] text-[15px] text-[#c0c0c0]">
      <div className="flex w-[169px] items-center border-b border-r border-[#2b2b2b] bg-[#424242] pl-[18px] text-[15px] tracking-[-0.100px]"><span className="w-[80px]">Accueil</span><span>Outils</span></div>
      <div className="flex w-[179px] items-center text-[14px] text-[#e6e6e6]"><span className="ml-[72px] tracking-[0.300px]">C = 5</span><span className="ml-auto mr-[8px] text-[17px] font-bold leading-4 text-[#d0d0d0]">×</span></div>
      <div className="flex flex-1 items-center border-b border-l border-[#2b2b2b] bg-[#424242]">
        <CircleHelp className="ml-[30px] h-[23px] w-[23px]" strokeWidth={1.800} /><Bell className="ml-[19px] h-5 w-5 text-[#858585]" fill="#858585" />
        <span className="ml-[31px] whitespace-nowrap text-[15.500px] font-semibold tracking-[0.150px] text-white">Se connecter</span>
      </div>
    </div>
    <div className="flex h-[48px] shrink-0 items-center border-b border-[#3a3a3a] pt-px text-[13px] text-[#c8c8c8]">
      <Save className="ml-[13px] h-6 w-6 text-[#8b8b8b]" strokeWidth={1.700} />
      <Star className="ml-[19px] h-[25px] w-[25px]" strokeWidth={1.800} /><CloudUpload className="ml-[19px] h-6 w-6" /><Printer className="ml-[19px] h-6 w-6" strokeWidth={2.500} />
      <G c="#c8c8c8" className="ml-[21px]"><circle cx="10" cy="10" r="8" /><path d="m16 16 7 7" strokeWidth="3" /><path d="M5.500 10h2M9 10h2M12.500 10h2" /></G>
      <span className="ml-[20px] flex h-[34px] w-[29px] items-center justify-center border-b border-[#6a6a6a] text-xs text-[#e4e4e4]">10</span><span className="ml-[6px] whitespace-pre text-xs text-[#e4e4e4]">/  11</span>
      <span className="ml-[20px] h-8 w-px bg-[#3a3a3a]" />
      <span className="ml-[18px] flex h-[34px] w-[69px] items-center justify-between border-b border-[#6a6a6a] pl-[9px] pr-[8px] text-xs tracking-[-0.500px] text-[#e4e4e4]">100%<i className="border-x-4 border-t-4 border-x-transparent border-t-[#c8c8c8]" /></span>
      <Ellipsis className="ml-[22px] h-6 w-6" strokeWidth={3} />
      <Link2 className="ml-[24px] h-6 w-6 -rotate-45" strokeWidth={2.500} /><svg viewBox="0 0 14 10" className="-ml-3 mt-4 h-[10px] w-[14px]"><path d="M3 10c-4 0-3-5 0-5 1-6 7-4 7 0 5 0 5 5 2 5z" fill="#c8c8c8" /></svg>
      <G c="#c8c8c8" className="ml-[19px]"><path d="M1.500 4h21v16h-21zM2 4.500l10 8 10-8M2 19.500l7.500-9M22 19.500l-7.500-9" strokeWidth="1.500" /></G>
      <G c="#c8c8c8" className="ml-[20px]"><path d="M20.500 15A10 10 0 1 0 13 21.500" strokeWidth="1.600" /><path d="M4 18c1-3 4-3 5-4-3-4-2-9 2-9s5 5 2 9c1 1 2 1 3 2l-3 5c-4 0-7-1-9-3z" fill="#c8c8c8" stroke="none" /><path d="M19 16v7M15.500 19.500h7" /></G>
    </div>
    <div className="flex flex-1">
      <div className="flex w-[18px] items-center bg-[#3a3839]"><i className="-mt-[4px] ml-[6px] border-y-[6px] border-l-[6px] border-y-transparent border-l-[#d0d0d0]" /></div>
      <div className="flex w-[499px] flex-col">
        <PdfPage />
        <div className="flex h-[18px] items-center bg-[#171717]">
          <div className="flex h-[16px] w-[131px] items-center justify-center bg-[#ececec] text-xs tracking-[-0.400px] text-black">190.5 x 338.7 mm</div>
          <svg viewBox="0 0 8 8" className="ml-1 h-2 w-2" fill="none" stroke="#999" strokeWidth="1.500"><path d="M6 1 2 4l4 3" /></svg>
          <div className="ml-[48px] h-4 w-[202px] bg-[#4b4b4b]" />
          <svg viewBox="0 0 8 8" className="ml-auto mr-1 h-2 w-2" fill="none" stroke="#999" strokeWidth="1.500"><path d="m2 1 4 3-4 3" /></svg>
        </div>
      </div>
      <div className="flex w-[17px] flex-col items-center bg-[#171717] pb-[21px] pt-[5px]">
        <svg viewBox="0 0 8 8" className="h-2 w-2" fill="none" stroke="#999" strokeWidth="1.500"><path d="m1 6 3-4 3 4" /></svg>
        <div className="mt-[702px] h-[44px] w-[15px] bg-[#4e4e4e]" />
        <svg viewBox="0 0 8 8" className="mt-auto h-2 w-2" fill="none" stroke="#999" strokeWidth="1.500"><path d="m1 2 3 4 3-4" /></svg>
      </div>
      <div className="flex w-[18px] items-center bg-[#404040]"><i className="-mt-[4px] ml-[6px] border-y-[5px] border-r-[6px] border-y-transparent border-r-[#d0d0d0]" /></div>
      <Tools />
    </div>
  </div>
);

export default function App() {
  return (
    <div className="flex h-[1036px] w-[1920px] overflow-hidden bg-[#cfcfe6]">
      <Catia />
      <Acrobat />
    </div>
  );
}
